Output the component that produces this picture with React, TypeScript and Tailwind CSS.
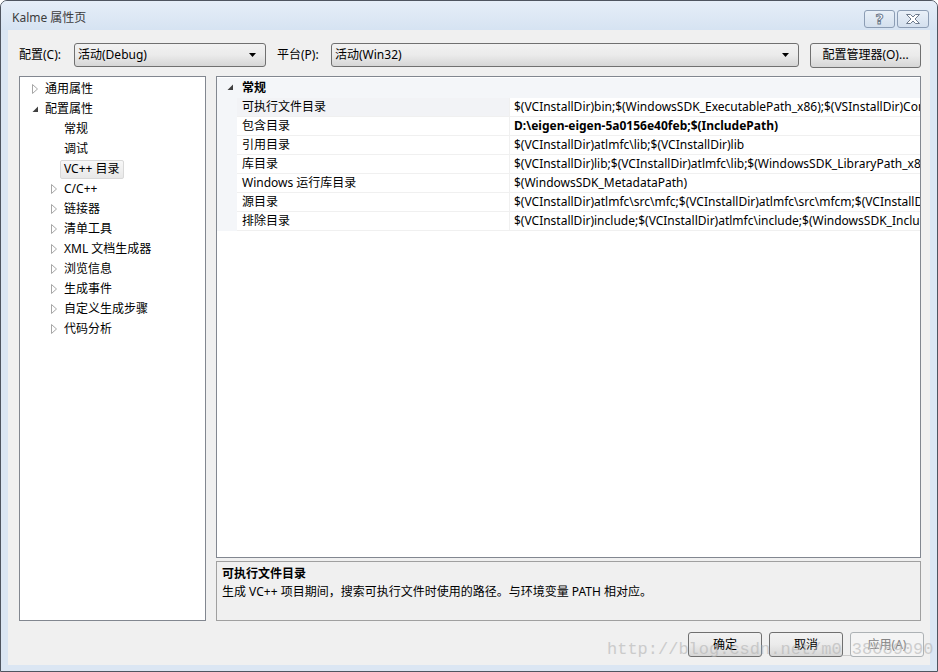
import React from "react";

const FONT = { fontFamily: '"Noto Sans", "Noto Sans CJK SC", sans-serif' };

function Collapsed() {
  return (
    <svg width="7" height="10" viewBox="0 0 7 10" className="shrink-0">
      <polygon points="0.5,0.5 5.5,5 0.5,9.5" fill="#ffffff" stroke="#a6a6a6" strokeWidth="1" />
    </svg>
  );
}

function Expanded() {
  return (
    <svg width="7" height="7" viewBox="0 0 7 7" className="shrink-0">
      <polygon points="6,0.5 6,6 0.5,6" fill="#404040" />
    </svg>
  );
}

type TreeItem = { label: string; level: number; kind: "leaf" | "collapsed" | "expanded"; selected?: boolean };

const tree: TreeItem[] = [
  { label: "通用属性", level: 0, kind: "collapsed" },
  { label: "配置属性", level: 0, kind: "expanded" },
  { label: "常规", level: 1, kind: "leaf" },
  { label: "调试", level: 1, kind: "leaf" },
  { label: "VC++ 目录", level: 1, kind: "leaf", selected: true },
  { label: "C/C++", level: 1, kind: "collapsed" },
  { label: "链接器", level: 1, kind: "collapsed" },
  { label: "清单工具", level: 1, kind: "collapsed" },
  { label: "XML 文档生成器", level: 1, kind: "collapsed" },
  { label: "浏览信息", level: 1, kind: "collapsed" },
  { label: "生成事件", level: 1, kind: "collapsed" },
  { label: "自定义生成步骤", level: 1, kind: "collapsed" },
  { label: "代码分析", level: 1, kind: "collapsed" },
];

const rows: { name: string; value: string; bold?: boolean; selected?: boolean }[] = [
  { name: "可执行文件目录", value: "$(VCInstallDir)bin;$(WindowsSDK_ExecutablePath_x86);$(VSInstallDir)Common7\\Tools\\bin;$(VSInstallDir)Common7\\tools;$(VSInstallDir)Common7\\ide", selected: true },
  { name: "包含目录", value: "D:\\eigen-eigen-5a0156e40feb;$(IncludePath)", bold: true },
  { name: "引用目录", value: "$(VCInstallDir)atlmfc\\lib;$(VCInstallDir)lib" },
  { name: "库目录", value: "$(VCInstallDir)lib;$(VCInstallDir)atlmfc\\lib;$(WindowsSDK_LibraryPath_x86);" },
  { name: "Windows 运行库目录", value: "$(WindowsSDK_MetadataPath)" },
  { name: "源目录", value: "$(VCInstallDir)atlmfc\\src\\mfc;$(VCInstallDir)atlmfc\\src\\mfcm;$(VCInstallDir)atlmfc\\src\\atl;$(VCInstallDir)crt\\src;" },
  { name: "排除目录", value: "$(VCInstallDir)include;$(VCInstallDir)atlmfc\\include;$(WindowsSDK_IncludePath);$(MSBuildToolsPath32);" },
];

function Combo({ text, className }: { text: string; className: string }) {
  return (
    <div className={"h-[24px] shrink-0 rounded-[3px] border border-[#707070] flex items-center pl-[3px] pr-[9px] bg-gradient-to-b from-[#f2f2f2] via-[#ebebeb] to-[#d6d6d6] " + className}>
      <span className="flex-1 text-[12px] text-black leading-none">{text}</span>
      <svg width="7" height="4" viewBox="0 0 7 4">
        <polygon points="0,0 7,0 3.5,4" fill="#000" />
      </svg>
    </div>
  );
}

function Btn({ text, disabled, className }: { text: string; disabled?: boolean; className?: string }) {
  return (
    <div
      className={
        "h-[25px] shrink-0 rounded-[3px] border flex items-center justify-center text-[12px] leading-none " +
        (disabled
          ? "border-[#adb2b5] bg-[#f4f4f4] text-[#838383] "
          : "border-[#707070] bg-gradient-to-b from-[#f2f2f2] via-[#ebebeb] to-[#d6d6d6] text-black ") +
        (className ?? "")
      }
    >
      {text}
    </div>
  );
}

export default function App() {
  return (
    <div className="w-[938px] h-[672px] overflow-hidden" style={FONT}>
      <div className="w-[938px] h-[672px] relative border border-[#4f5560] rounded-t-[7px] bg-[#dbe6f3] flex flex-col">
        {/* title bar */}
        <div className="h-[29px] shrink-0 flex items-start bg-gradient-to-b from-[#e6eef8] to-[#d6e3f2] rounded-t-[6px]">
          <div className="pl-[11px] pt-[9px] text-[12px] text-[#3c3c3c] leading-[16px]">Kalme 属性页</div>
          <div className="flex-1" />
          <div className="flex gap-[2px] pt-[9px] pr-[8px]">
            <div className="w-[31px] h-[18px] rounded-[3px] border border-[#8c9db4] bg-gradient-to-b from-[#e9f0f8] to-[#d4e0ee] flex items-center justify-center">
              <span
                className="text-[14px] font-bold leading-none text-white"
                style={{ WebkitTextStroke: "1px #6d7a8c", fontFamily: '"DejaVu Sans", sans-serif' }}
              >
                ?
              </span>
            </div>
            <div className="w-[32px] h-[18px] rounded-[3px] border border-[#8c9db4] bg-gradient-to-b from-[#e9f0f8] to-[#d4e0ee] flex items-center justify-center">
              <svg width="16" height="10" viewBox="0 0 16 10">
                <path
                  d="M1.5,0.5 L5.5,0.5 L8,3 L10.5,0.5 L14.5,0.5 L10,5 L14.5,9.5 L10.5,9.5 L8,7 L5.5,9.5 L1.5,9.5 L6,5 Z"
                  fill="#ffffff"
                  stroke="#6d7a8c"
                  strokeWidth="1"
                />
              </svg>
            </div>
          </div>
        </div>

        {/* client area */}
        <div className="flex-1 min-h-0 mx-[7px] mb-[6px] bg-[#f0f0f0] flex flex-col pl-[11px] pr-[9px] pt-[13px]">
          {/* config row */}
          <div className="h-[24px] flex items-center shrink-0">
            <span className="text-[12px] text-black w-[55px] shrink-0">配置(C):</span>
            <Combo text="活动(Debug)" className="w-[192px]" />
            <span className="text-[12px] text-black ml-[11px] w-[54px] shrink-0">平台(P):</span>
            <Combo text="活动(Win32)" className="w-[468px]" />
            <div className="flex-1" />
            <Btn text="配置管理器(O)..." className="w-[111px] h-[24px]" />
          </div>

          {/* panels */}
          <div className="h-[545px] mt-[9px] flex gap-[10px] shrink-0 min-w-0">
            {/* tree */}
            <div className="w-[187px] shrink-0 h-full bg-white border border-[#828790] pt-[2px]">
              {tree.map((t, i) => (
                <div
                  key={i}
                  className="h-[20px] flex items-center text-[12px] text-black"
                  style={{ paddingLeft: t.level === 0 ? 12 : 31 }}
                >
                  <div className="w-[13px] shrink-0 flex items-center">
                    {t.kind === "collapsed" && <Collapsed />}
                    {t.kind === "expanded" && <Expanded />}
                  </div>
                  <span
                    className={
                      "h-[19px] -ml-[4px] px-[3px] rounded-[2px] border flex items-center whitespace-nowrap " +
                      (t.selected
                        ? "border-[#d9d9d9] bg-gradient-to-b from-[#f8f8f8] to-[#e8e8e8]"
                        : "border-transparent")
                    }
                  >
                    {t.label}
                  </span>
                </div>
              ))}
            </div>

            {/* right side */}
            <div className="w-[705px] shrink-0 min-w-0 h-full flex flex-col">
              <div className="flex-1 min-h-0 bg-white border border-[#828790] pt-[1px] overflow-hidden">
                {/* header */}
                <div className="h-[20px] flex items-center pb-[1px] bg-[#f4f6f9]">
                  <div className="w-[20px] shrink-0 flex justify-end pr-[3px]">
                    <Expanded />
                  </div>
                  <span className="pl-[5px] text-[12px] font-bold text-black">常规</span>
                </div>
                {rows.map((r, i) => (
                  <div key={i} className="h-[19px] flex text-[12px] text-black min-w-0">
                    <div className="w-[20px] shrink-0 bg-[#f4f6f9]" />
                    <div
                      className={
                        "w-[273px] shrink-0 border-b border-r border-[#f0f0f0] flex items-center pl-[5px] whitespace-nowrap " +
                        (r.selected ? "bg-[#f2f3f6]" : "bg-white")
                      }
                    >
                      {r.name}
                    </div>
                    <div
                      className={
                        "flex-1 min-w-0 border-b border-[#f0f0f0] flex items-center pl-[4px] whitespace-nowrap overflow-hidden " +
                        (r.bold ? "font-bold" : "")
                      }
                    >
                      {r.value}
                    </div>
                  </div>
                ))}
              </div>
              {/* description */}
              <div className="h-[60px] mt-[3px] shrink-0 border border-[#a0a0a0] bg-[#f0f0f0] px-[5px] pt-[3px] text-[12px] text-black">
                <div className="font-bold leading-[18px]">可执行文件目录</div>
                <div className="leading-[18px]">生成 VC++ 项目期间，搜索可执行文件时使用的路径。与环境变量 PATH 相对应。</div>
              </div>
            </div>
          </div>

          {/* buttons */}
          <div className="mt-[11px] h-[25px] flex justify-end gap-[7px] -mr-[3px] shrink-0">
            <Btn text="确定" className="w-[74px]" />
            <Btn text="取消" className="w-[74px]" />
            <Btn text="应用(A)" disabled className="w-[74px]" />
          </div>
        </div>

        {/* watermark */}
        <div
          className="absolute left-[606px] top-[639px] text-[17px] leading-[20px] text-[#b4b4b4] opacity-60 pointer-events-none whitespace-nowrap"
          style={{ fontFamily: '"Liberation Mono", monospace' }}
        >
          http://blog.csdn.net/m0_38089090
        </div>
      </div>
    </div>
  );
}
